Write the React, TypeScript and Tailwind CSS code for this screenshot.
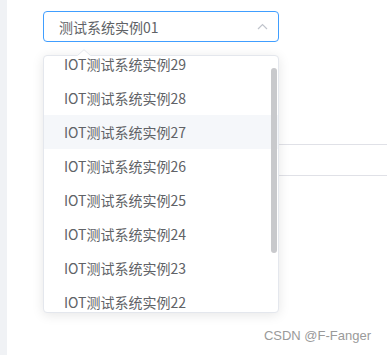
import React from "react";

const items = [29, 28, 27, 26, 25, 24, 23, 22];

export default function App() {
  return (
    <div
      className="relative flex w-[387px] h-[355px] bg-white overflow-hidden"
      style={{ fontFamily: '"Noto Sans CJK SC", "Noto Sans", sans-serif' }}
    >
      <div className="w-[7px] h-full bg-[#f0f2f5]" />
      <div className="relative flex-1 pt-[11px]">
        <div className="ml-[36px] w-[236px] h-[31px] border border-[#409eff] rounded-[4px] flex items-center justify-between pl-[15px] pr-[10px] text-[14px] text-[#606266]">
          <span className="leading-none">测试系统实例01</span>
          <svg width="11" height="7" viewBox="0 0 11 7" className="mt-[-1px]">
            <polyline points="1,6 5.5,1.5 10,6" fill="none" stroke="#c0c4cc" strokeWidth="1.2" />
          </svg>
        </div>
        <div className="ml-[36px] h-[103px] border-b border-[#e0e1e7]" />
        <div className="ml-[36px] h-[31px] border-b border-[#e0e1e7]" />

        <div className="absolute left-[36px] top-[55px] w-[236px] h-[258px]">
          <svg
            width="14"
            height="8"
            viewBox="0 0 14 8"
            className="absolute left-[34px] top-[-6px] z-20"
          >
            <polygon points="0,7 7,0.5 14,7 14,8 0,8" fill="#ffffff" />
            <polyline points="0.5,6.5 7,0.7 13.5,6.5" fill="none" stroke="#e4e7ed" strokeWidth="1" />
          </svg>
          <div className="relative w-full h-full bg-white border border-[#e4e7ed] rounded-[4px] shadow-[0_2px_12px_0_rgba(0,0,0,0.1)] overflow-hidden z-10">
            <div className="flex flex-col mt-[-9px]">
              {items.map((n) => (
                <div
                  key={n}
                  className={`h-[34px] leading-[34px] px-[20px] text-[14px] text-[#606266] whitespace-nowrap ${
                    n === 27 ? "bg-[#f5f7fa]" : ""
                  }`}
                >
                  IOT测试系统实例{n}
                </div>
              ))}
            </div>
            <div className="absolute right-[1px] top-[12px] w-[6px] h-[185px] rounded-[3px] bg-[#c8c9cc]" />
          </div>
        </div>
      </div>
      <div
        className="absolute right-[16px] top-[329px] text-[13px] text-[#9a9a9a] leading-none"
        style={{ fontFamily: '"Liberation Sans", Arial, sans-serif' }}
      >
        CSDN @F-Fanger
      </div>
    </div>
  );
}
